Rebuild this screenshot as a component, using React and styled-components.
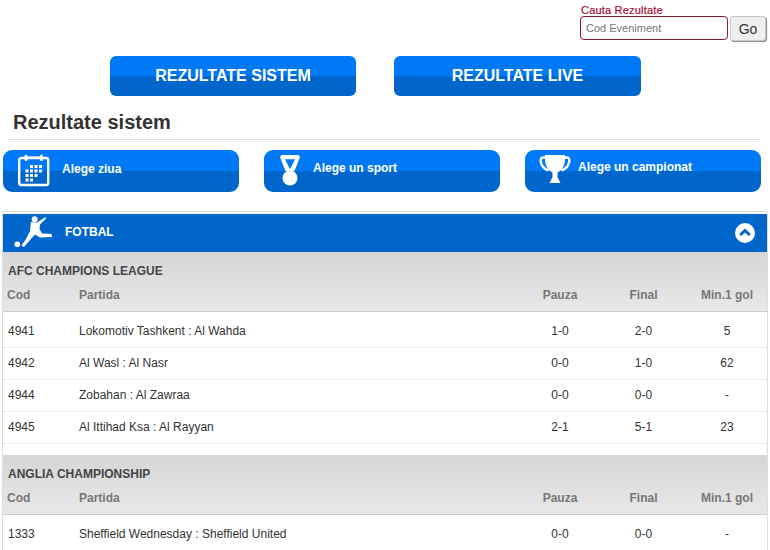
import React from "react";
import styled, { createGlobalStyle, css } from "styled-components";

const GlobalStyle = createGlobalStyle`
  * {
    box-sizing: border-box;
  }
  html, body {
    margin: 0;
    padding: 0;
    background: #fff;
    overflow: hidden;
  }
  body {
    font-family: "Liberation Sans", Arial, sans-serif;
    color: #333;
  }
`;

const blueSplit = css`
  background: linear-gradient(to bottom, #0079f7 0%, #0079f7 50%, #0066cc 50%, #0066cc 100%);
`;

const CalendarIcon = () => (
  <svg width="32" height="34" viewBox="0 0 32 34" fill="none">
    <rect x="1.200" y="4" width="29" height="27" rx="2" stroke="#fff" strokeWidth="2.400" />
    <rect x="6.500" y="0.500" width="3" height="6.500" rx="1.500" fill="#fff" />
    <rect x="22" y="0.500" width="3" height="6.500" rx="1.500" fill="#fff" />
    <path d="M9 2.500H22V4.500H9z" fill="#fff" />
    <path
      d="M12 11h3v3h-3zM16.500 11h3v3h-3zM21 11h3v3h-3zM7.500 15.500h3v3h-3zM12 15.500h3v3h-3zM16.500 15.500h3v3h-3zM21 15.500h3v3h-3zM7.500 20h3v3h-3zM12 20h3v3h-3zM16.500 20h3v3h-3zM7.500 24.500h3v3h-3zM12 24.500h3v3h-3z"
      fill="#fff"
    />
  </svg>
);

const MedalIcon = () => (
  <svg width="22" height="34" viewBox="0 0 22 34" fill="none">
    <path
      fillRule="evenodd"
      d="M2.500 1H19.500L21 3L15.500 17H6.500L1 3ZM6 5.300L11 15.300L16 5.300Z"
      fill="#fff"
    />
    <circle cx="11" cy="24" r="7.500" fill="#fff" />
  </svg>
);

const TrophyIcon = () => (
  <svg width="32" height="34" viewBox="0 0 32 34" fill="none">
    <path d="M7 3.500H4C2 3.500 1.300 5.500 1.800 8C2.500 12 5 15 9.500 16.500" stroke="#fff" strokeWidth="2.400" />
    <path d="M25 3.500H28C30 3.500 30.700 5.500 30.200 8C29.500 12 27 15 22.500 16.500" stroke="#fff" strokeWidth="2.400" />
    <path d="M6 1H26V6C26 12 22.500 16.500 18.500 18.500V23L21.500 29H10.500L13.500 23V18.500C9.500 16.500 6 12 6 6Z" fill="#fff" />
  </svg>
);

const PlayerIcon = () => (
  <svg width="40" height="34" viewBox="0 0 40 34" fill="#fff">
    <circle cx="3.300" cy="28.300" r="2.800" />
    <circle cx="20.700" cy="3.300" r="3" />
    <path d="M17 6L23 6.500L31.500 1L32 2.500L26 8.500L25.500 13L28 17.500L37.500 18L38 21L26 21.500L21 18.500L16 24L10 31L7.500 29.500L12 23L16 15L16.500 10Z" />
  </svg>
);

const ChevronUpCircle = () => (
  <svg width="20" height="20" viewBox="0 0 20 20">
    <circle cx="10" cy="10" r="10" fill="#fff" />
    <path d="M5.200 12L10 7.500L14.800 12" fill="none" stroke="#0066cc" strokeWidth="3" />
  </svg>
);

const groups = [
  {
    name: "AFC CHAMPIONS LEAGUE",
    rows: [
      ["4941", "Lokomotiv Tashkent : Al Wahda", "1-0", "2-0", "5"],
      ["4942", "Al Wasl : Al Nasr", "0-0", "1-0", "62"],
      ["4944", "Zobahan : Al Zawraa", "0-0", "0-0", "-"],
      ["4945", "Al Ittihad Ksa : Al Rayyan", "2-1", "5-1", "23"],
    ],
  },
  {
    name: "ANGLIA CHAMPIONSHIP",
    rows: [["1333", "Sheffield Wednesday : Sheffield United", "0-0", "0-0", "-"]],
  },
];

const App = () => (
  <Page>
    <GlobalStyle />
    <SearchArea>
      <SearchLabel>Cauta Rezultate</SearchLabel>
      <SearchRow>
        <SearchInput placeholder="Cod Eveniment" />
        <GoButton>Go</GoButton>
      </SearchRow>
    </SearchArea>

    <MainTabs>
      <MainTab $width={246}>REZULTATE SISTEM</MainTab>
      <MainTab $width={247}>REZULTATE LIVE</MainTab>
    </MainTabs>

    <PageTitle>Rezultate sistem</PageTitle>

    <Filters>
      <FilterButton $pad={15} $gap={12} $textY={0}>
        <CalendarIcon />
        <span>Alege ziua</span>
      </FilterButton>
      <FilterButton $pad={15} $gap={12} $textY={-1}>
        <MedalIcon />
        <span>Alege un sport</span>
      </FilterButton>
      <FilterButton $pad={14} $gap={7} $textY={-2}>
        <TrophyIcon />
        <span>Alege un campionat</span>
      </FilterButton>
    </Filters>

    <Panel>
      <SportBar>
        <SportName>
          <PlayerIcon />
          <span>FOTBAL</span>
        </SportName>
        <ChevronUpCircle />
      </SportBar>

      {groups.map((group) => (
        <Group key={group.name}>
          <GroupHead>
            <GroupName>{group.name}</GroupName>
            <HeadRow>
              <span>Cod</span>
              <span>Partida</span>
              <Centered>Pauza</Centered>
              <Centered>Final</Centered>
              <Centered>Min.1 gol</Centered>
            </HeadRow>
          </GroupHead>
          <Rows>
            {group.rows.map((row) => (
              <Row key={row[0]}>
                <span>{row[0]}</span>
                <span>{row[1]}</span>
                <Centered>{row[2]}</Centered>
                <Centered>{row[3]}</Centered>
                <Centered>{row[4]}</Centered>
              </Row>
            ))}
          </Rows>
        </Group>
      ))}
    </Panel>
  </Page>
);

export default App;

const Page = styled.div`
  width: 770px;
  height: 550px;
  overflow: hidden;
`;
const SearchArea = styled.div`
  display: flex;
  flex-direction: column;
  align-items: flex-start;
  height: 56px;
  padding: 4px 0 0 580px;
`;
const SearchLabel = styled.label`
  font-size: 11px;
  line-height: 12px;
  padding-left: 1px;
  letter-spacing: 0.2px;
  -webkit-text-stroke: 0.2px #a50d35;
  color: #a50d35;
`;
const SearchRow = styled.div`
  display: flex;
  gap: 2px;
`;
const SearchInput = styled.input`
  width: 148px;
  height: 24px;
  padding: 0 5px;
  border: 1px solid #8e1a2f;
  border-radius: 4px;
  outline: none;
  background: #fff;
  font-family: inherit;
  font-size: 11px;
  &::placeholder {
    color: #757575;
    opacity: 1;
  }
`;
const GoButton = styled.button`
  width: 36px;
  height: 25px;
  padding: 0;
  border: 1px solid #c8c8c8;
  border-radius: 3px;
  background: #efefef;
  box-shadow: 1px 1px 1px #888;
  font-family: inherit;
  font-size: 14px;
  color: #333;
`;
const MainTabs = styled.div`
  display: flex;
  gap: 38px;
  padding-left: 110px;
`;
const MainTab = styled.div`
  ${blueSplit}
  width: ${(p) => p.$width}px;
  height: 40px;
  border-radius: 6px;
  color: #fff;
  font-size: 16px;
  font-weight: 700;
  line-height: 40px;
  text-align: center;
`;
const PageTitle = styled.h1`
  margin: 13px 10px 0 8px;
  padding: 0 0 3px 5px;
  border-bottom: 1px solid #ddd;
  font-size: 20px;
  font-weight: 700;
  line-height: 27px;
  color: #333;
`;
const Filters = styled.div`
  display: flex;
  gap: 25px;
  padding: 10px 0 0 3px;
`;
const FilterButton = styled.div`
  ${blueSplit}
  display: flex;
  align-items: center;
  gap: ${(p) => p.$gap}px;
  width: 236px;
  height: 42px;
  padding-left: ${(p) => p.$pad}px;
  border-radius: 9px;
  color: #fff;
  font-size: 12px;
  font-weight: 700;
  span {
    transform: translateY(${(p) => p.$textY - 2}px);
  }
`;
const Panel = styled.div`
  margin: 19px 2px 0 2px;
  padding: 2px 0 0 0;
  border: 1px solid #ddd;
  border-bottom: 0;
`;
const SportBar = styled.div`
  display: flex;
  align-items: center;
  justify-content: space-between;
  height: 38px;
  padding: 0 12px 0 11px;
  background: #0066cc;
  color: #fff;
`;
const SportName = styled.div`
  display: flex;
  align-items: center;
  gap: 11px;
  font-size: 12px;
  font-weight: 700;
  span {
    transform: translateY(-1px);
  }
`;
const Group = styled.section`
  padding-bottom: 11px;
`;
const GroupHead = styled.div`
  height: 60px;
  padding: 12px 0 0 5px;
  background: linear-gradient(to bottom, #d6d6d6, #e8e8e8);
  border-bottom: 1px solid #ccc;
`;
const GroupName = styled.div`
  font-size: 12px;
  font-weight: 700;
  line-height: 14px;
  color: #444;
`;
const columns = css`
  display: grid;
  grid-template-columns: 71px 1fr 84px 83px 82px;
  align-items: center;
`;
const HeadRow = styled.div`
  ${columns}
  margin-top: 10px;
  margin-left: -1px;
  grid-template-columns: 72px 1fr 84px 83px 82px;
  font-size: 12px;
  font-weight: 700;
  line-height: 14px;
  color: #777;
`;
const Rows = styled.div`
  padding-top: 4px;
`;
const Row = styled.div`
  ${columns}
  height: 32px;
  padding: 0 0 2px 5px;
  border-bottom: 1px dotted #ddd;
  font-size: 12px;
  color: #333;
`;
const Centered = styled.span`
  text-align: center;
  &:last-child {
    padding-left: 2px;
  }
`;
